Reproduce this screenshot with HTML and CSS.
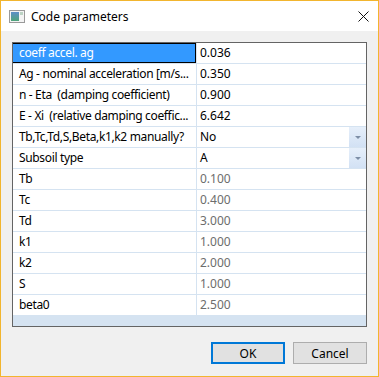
FILE: index.html
```html
<!DOCTYPE html>
<html lang="en">
<head>
    <meta charset="UTF-8">
    <title>Code parameters</title>
    <link rel="stylesheet" href="styles.css">
</head>
<body>
    <div class="window">
        <div class="titlebar">
            <svg class="app-icon" width="16" height="13" viewBox="0 0 16 13">
                <defs>
                    <linearGradient id="pane" x1="0" y1="0" x2="0" y2="1">
                        <stop offset="0" stop-color="#5d8fc9"/>
                        <stop offset="1" stop-color="#4fa57a"/>
                    </linearGradient>
                </defs>
                <rect x="0.5" y="0.5" width="15" height="12" fill="#f4f4f4" stroke="#9a9a9a"/>
                <rect x="2" y="2" width="8" height="9" fill="url(#pane)"/>
                <rect x="11" y="2" width="3" height="3" fill="#bcd3c4"/>
            </svg>
            <span class="title">Code parameters</span>
            <svg class="close" width="11" height="11" viewBox="0 0 11 11">
                <path d="M0.5 0.5 L10.5 10.5 M10.5 0.5 L0.5 10.5" stroke="#111" stroke-width="1"/>
            </svg>
        </div>

        <div class="content">
            <div class="grid">
                <div class="row">
                    <div class="label selected">coeff accel. ag</div>
                    <div class="value">0.036</div>
                </div>
                <div class="row">
                    <div class="label">Ag - nominal acceleration [m/s...</div>
                    <div class="value">0.350</div>
                </div>
                <div class="row">
                    <div class="label">n - Eta&nbsp; (damping coefficient)</div>
                    <div class="value">0.900</div>
                </div>
                <div class="row">
                    <div class="label">E - Xi&nbsp; (relative damping coeffic...</div>
                    <div class="value">6.642</div>
                </div>
                <div class="row">
                    <div class="label">Tb,Tc,Td,S,Beta,k1,k2 manually?</div>
                    <div class="value combo">No<span class="drop"></span></div>
                </div>
                <div class="row">
                    <div class="label">Subsoil type</div>
                    <div class="value combo">A<span class="drop"></span></div>
                </div>
                <div class="row">
                    <div class="label">Tb</div>
                    <div class="value readonly">0.100</div>
                </div>
                <div class="row">
                    <div class="label">Tc</div>
                    <div class="value readonly">0.400</div>
                </div>
                <div class="row">
                    <div class="label">Td</div>
                    <div class="value readonly">3.000</div>
                </div>
                <div class="row">
                    <div class="label">k1</div>
                    <div class="value readonly">1.000</div>
                </div>
                <div class="row">
                    <div class="label">k2</div>
                    <div class="value readonly">2.000</div>
                </div>
                <div class="row">
                    <div class="label">S</div>
                    <div class="value readonly">1.000</div>
                </div>
                <div class="row">
                    <div class="label">beta0</div>
                    <div class="value readonly">2.500</div>
                </div>
            </div>

            <div class="buttons">
                <button class="btn default">OK</button>
                <button class="btn">Cancel</button>
            </div>
        </div>
    </div>
</body>
</html>
```

FILE: styles.css
```css
* {
    margin: 0;
    padding: 0;
    box-sizing: border-box;
}

body {
    font-family: 'Noto Sans', 'Open Sans', sans-serif;
    font-size: 12px;
    background: #ffffff;
}

.window {
    width: 379px;
    height: 377px;
    border: 1px solid #f2b52e;
    display: flex;
    flex-direction: column;
    background: #f0f0f0;
}

.titlebar {
    height: 30px;
    background: #ffffff;
    display: flex;
    align-items: center;
    padding-left: 8px;
    padding-right: 9px;
}

.app-icon {
    margin-top: 1px;
}

.title {
    margin-left: 6px;
    color: #000;
    flex: 1;
}

.content {
    flex: 1;
    padding: 11px 11px 0 11px;
    display: flex;
    flex-direction: column;
}

.grid {
    height: 285px;
    border: 1px solid #646464;
    background: #d5e3f1;
    display: flex;
    flex-direction: column;
}

.row {
    display: grid;
    grid-template-columns: 183px 169px;
    height: 21px;
    background: #d5e3f1;
    column-gap: 1px;
    border-right: 1px solid #d5e3f1;
}

.label,
.value {
    height: 20px;
    line-height: 20px;
    background: #ffffff;
    white-space: nowrap;
    overflow: hidden;
    color: #000;
}

.label {
    padding-left: 6px;
    letter-spacing: -0.35px;
}

.label.selected {
    background: #3399ff;
    color: #ffffff;
    box-shadow: inset -1px -1px 0 #000, inset 0 1px 0 #000;
}

.value {
    padding-left: 3px;
    position: relative;
}

.value.readonly {
    color: #6d6d6d;
}

.drop {
    position: absolute;
    right: 0;
    top: 0;
    width: 17px;
    height: 20px;
    background: linear-gradient(#e6effa, #d2e1f4);
}

.drop::after {
    content: "";
    position: absolute;
    left: 6px;
    top: 9px;
    border-left: 3px solid transparent;
    border-right: 3px solid transparent;
    border-top: 3px solid #7d8ea6;
}

.buttons {
    display: flex;
    justify-content: flex-end;
    gap: 8px;
    margin-top: 15px;
}

.btn {
    width: 74px;
    height: 22px;
    font-family: inherit;
    font-size: 12px;
    color: #000;
    background: #e1e1e1;
    border: 1px solid #adadad;
}

.btn.default {
    border: 2px solid #0078d7;
}
```
